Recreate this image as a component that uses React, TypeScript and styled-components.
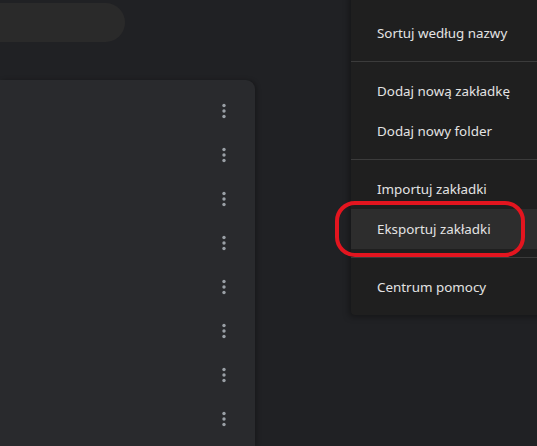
import React from "react";
import styled, { createGlobalStyle } from "styled-components";

const Global = createGlobalStyle`
  html, body { margin: 0; padding: 0; background: #202124; overflow: hidden; }
  #root { width: 537px; height: 446px; }
`;

const Page = styled.div`
  position: relative;
  width: 537px;
  height: 446px;
  overflow: hidden;
  background: #202124;
  display: flex;
  font-family: "Noto Sans", "Open Sans", sans-serif;
`;

const MainColumn = styled.div`
  width: 255px;
  display: flex;
  flex-direction: column;
  padding-top: 3px;
`;

const SearchBar = styled.div`
  width: 125px;
  height: 39px;
  background: #2a2a2a;
  border-radius: 0 20px 20px 0;
  flex: none;
`;

const Card = styled.div`
  margin-top: 38px;
  flex: 1;
  background: #292a2d;
  border-radius: 0 9px 0 0;
  box-shadow: 2px 0 4px rgba(0, 0, 0, 0.25);
  padding-top: 9px;
  display: flex;
  flex-direction: column;
`;

const Row = styled.div`
  height: 44px;
  display: flex;
  align-items: center;
  justify-content: flex-end;
  padding-right: 26px;
  flex: none;
`;

const Kebab = styled.svg`
  width: 10px;
  height: 18px;
  display: block;
`;

const Menu = styled.div`
  position: absolute;
  left: 351px;
  top: -8px;
  width: 200px;
  padding: 21px 0 8px;
  background: #1f1f1f;
  border-radius: 4px;
  box-shadow: -2px 2px 6px rgba(0, 0, 0, 0.35);
  display: flex;
  flex-direction: column;
`;

const Item = styled.div<{ $active?: boolean }>`
  height: 40px;
  display: flex;
  align-items: center;
  padding-left: 26px;
  font-size: 13.4px;
  color: #e3e3e3;
  background: ${(p) => (p.$active ? "#2d2d2d" : "transparent")};
  white-space: nowrap;
`;

const Separator = styled.div`
  height: 1px;
  margin: 8px 0 9px;
  background: #3b3b3b;
`;

const Annotation = styled.div`
  position: absolute;
  left: 335px;
  top: 201px;
  width: 190px;
  height: 56px;
  box-sizing: border-box;
  border: 4px solid #e3151f;
  border-radius: 20px;
  pointer-events: none;
`;

const Dots = () => (
  <Kebab viewBox="0 0 10 18">
    <circle cx="5" cy="3.5" r="1.7" fill="#9aa0a6" />
    <circle cx="5" cy="9" r="1.7" fill="#9aa0a6" />
    <circle cx="5" cy="14.5" r="1.7" fill="#9aa0a6" />
  </Kebab>
);

export default function App() {
  return (
    <>
      <Global />
      <Page>
        <MainColumn>
          <SearchBar />
          <Card>
            {Array.from({ length: 8 }).map((_, i) => (
              <Row key={i}>
                <Dots />
              </Row>
            ))}
          </Card>
        </MainColumn>
        <Menu>
          <Item>Sortuj według nazwy</Item>
          <Separator />
          <Item>Dodaj nową zakładkę</Item>
          <Item>Dodaj nowy folder</Item>
          <Separator />
          <Item>Importuj zakładki</Item>
          <Item $active>Eksportuj zakładki</Item>
          <Separator />
          <Item>Centrum pomocy</Item>
        </Menu>
        <Annotation />
      </Page>
    </>
  );
}
